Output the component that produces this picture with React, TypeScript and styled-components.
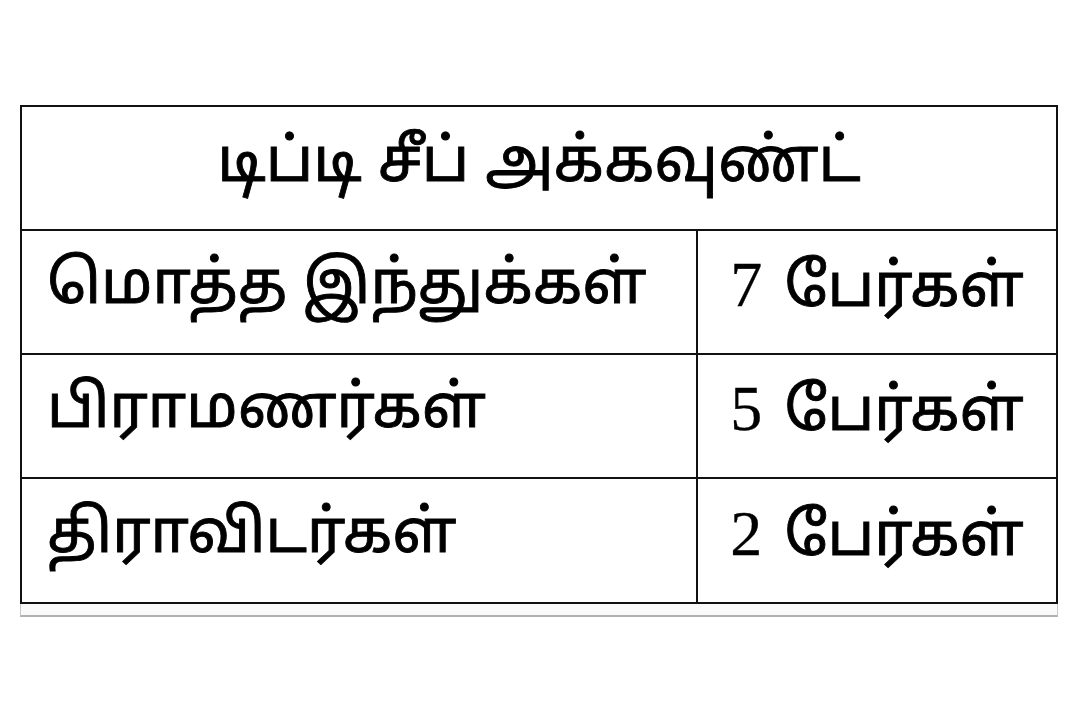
import React from "react";
import styled, { createGlobalStyle } from "styled-components";

const Global = createGlobalStyle`
  html, body { margin: 0; padding: 0; background: #ffffff; }
  body { font-family: "Noto Sans Tamil", "Lohit Tamil", "Noto Serif Tamil", "Liberation Serif", serif; }
`;

const Page = styled.div`
  width: 1072px;
  height: 715px;
  box-sizing: border-box;
  padding: 105px 14px 0 20px;
  background: #fff;
`;

const Sheet = styled.div`
  width: 1038px;
`;

const Table = styled.div`
  display: grid;
  grid-template-columns: 674px 1fr;
  border: 2px solid #111;
  box-sizing: border-box;
`;

const HeaderCell = styled.div`
  grid-column: 1 / span 2;
  height: 124px;
  display: flex;
  align-items: center;
  justify-content: center;
  padding-bottom: 4px;
  box-sizing: border-box;
  border-bottom: 2px solid #111;
  font-size: 61px;
  color: #000;
  -webkit-text-stroke: 0.9px #000;
`;

const Cell = styled.div<{ $right?: boolean; $last?: boolean }>`
  height: ${(p) => (p.$last ? "123px" : "124px")};
  box-sizing: border-box;
  display: flex;
  align-items: center;
  padding-bottom: 8px;
  justify-content: ${(p) => (p.$right ? "center" : "flex-start")};
  padding-left: ${(p) => (p.$right ? "0" : "25px")};
  border-bottom: ${(p) => (p.$last ? "none" : "2px solid #111")};
  border-left: ${(p) => (p.$right ? "2px solid #111" : "none")};
  font-size: 60px;
  color: #000;
  -webkit-text-stroke: 0.9px #000;
  white-space: nowrap;
`;

const Content = styled.span`
  display: inline-block;
`;

const Num = styled.span`
  font-family: "Liberation Serif", serif;
  font-size: 64px;
  margin-right: 22px;
  -webkit-text-stroke: 0.3px #000;
`;

const Shadow = styled.div`
  height: 11px;
  border: 1px solid #c8c8c8;
  border-top: none;
  border-bottom: 2px solid #b0b0b0;
  background: #fafafa;
`;

const rows = [
  { label: "மொத்த இந்துக்கள்", n: "7" },
  { label: "பிராமணர்கள்", n: "5" },
  { label: "திராவிடர்கள்", n: "2" },
];

export default function App() {
  return (
    <Page>
      <Global />
      <Sheet>
        <Table>
          <HeaderCell>டிப்டி சீப் அக்கவுண்ட்</HeaderCell>
          {rows.map((r, i) => (
            <React.Fragment key={r.n}>
              <Cell $last={i === rows.length - 1}>
                <Content>{r.label}</Content>
              </Cell>
              <Cell $right $last={i === rows.length - 1}>
                <Content>
                  <Num>{r.n}</Num>பேர்கள்
                </Content>
              </Cell>
            </React.Fragment>
          ))}
        </Table>
        <Shadow />
      </Sheet>
    </Page>
  );
}
